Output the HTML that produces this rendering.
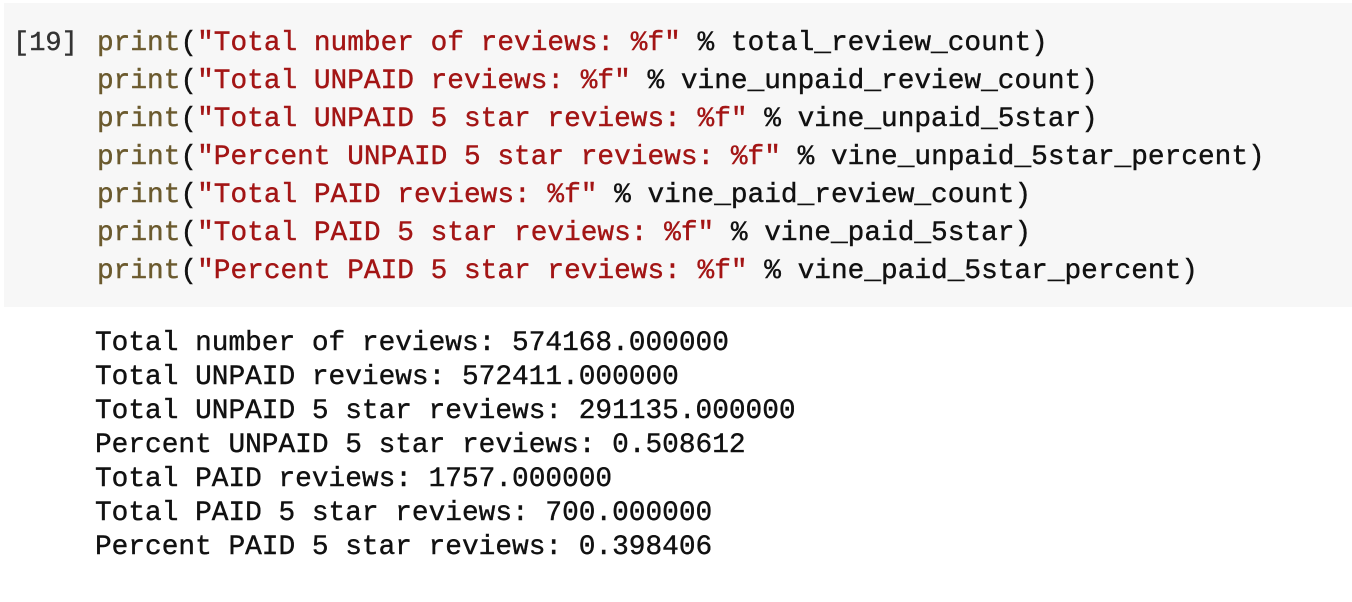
<!DOCTYPE html>
<html><head><style>
body{margin:0;width:1352px;height:602px;background:#fff;position:relative;overflow:hidden;font-family:"Liberation Mono",monospace;-webkit-text-stroke:0.4px currentColor;}
.code{position:absolute;left:4px;top:3px;right:0;height:304px;background:#f7f7f7;}
.l{position:absolute;white-space:pre;font-size:27.8px;line-height:38px;color:#111;}
.f{color:#6b5a2e}.s{color:#a31515}
.o{position:absolute;left:95px;top:327px;white-space:pre;font-size:27.8px;line-height:34px;color:#111;}
.n{position:absolute;left:13px;top:25px;font-size:27px;line-height:38px;color:#333;white-space:pre;}
</style></head><body>
<div class="code"></div>
<div class="n">[19]</div>
<div class="l" style="left:97px;top:25px"><span class="f">print</span>(<span class="s">"Total number of reviews: %f"</span> % total_review_count)
<span class="f">print</span>(<span class="s">"Total UNPAID reviews: %f"</span> % vine_unpaid_review_count)
<span class="f">print</span>(<span class="s">"Total UNPAID 5 star reviews: %f"</span> % vine_unpaid_5star)
<span class="f">print</span>(<span class="s">"Percent UNPAID 5 star reviews: %f"</span> % vine_unpaid_5star_percent)
<span class="f">print</span>(<span class="s">"Total PAID reviews: %f"</span> % vine_paid_review_count)
<span class="f">print</span>(<span class="s">"Total PAID 5 star reviews: %f"</span> % vine_paid_5star)
<span class="f">print</span>(<span class="s">"Percent PAID 5 star reviews: %f"</span> % vine_paid_5star_percent)</div>
<div class="o">Total number of reviews: 574168.000000
Total UNPAID reviews: 572411.000000
Total UNPAID 5 star reviews: 291135.000000
Percent UNPAID 5 star reviews: 0.508612
Total PAID reviews: 1757.000000
Total PAID 5 star reviews: 700.000000
Percent PAID 5 star reviews: 0.398406</div>
</body></html>
